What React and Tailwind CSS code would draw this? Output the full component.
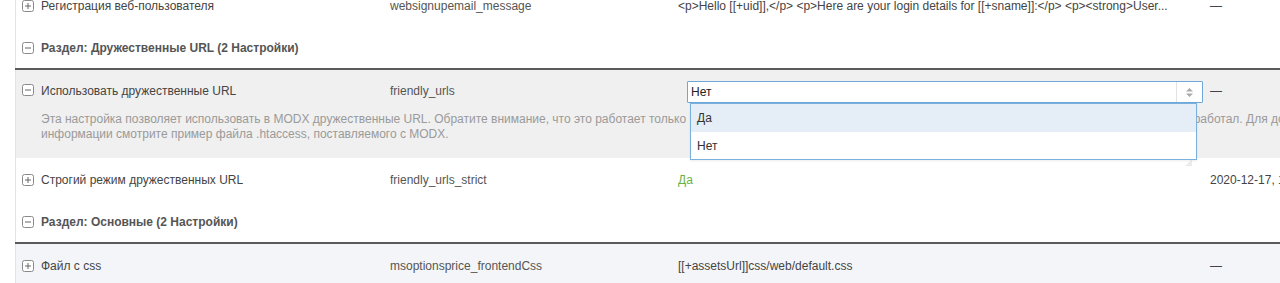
import React from "react";

function PlusBox() {
  return (
    <svg width="12" height="12" viewBox="0 0 12 12" className="block">
      <rect x="0.5" y="0.5" width="11" height="11" rx="2" fill="white" stroke="#8a8a8a" />
      <path d="M3 6h6M6 3v6" stroke="#666" strokeWidth="1" />
    </svg>
  );
}

function MinusBox() {
  return (
    <svg width="12" height="12" viewBox="0 0 12 12" className="block">
      <rect x="0.5" y="0.5" width="11" height="11" rx="2" fill="white" stroke="#8a8a8a" />
      <path d="M3 6h6" stroke="#666" strokeWidth="1" />
    </svg>
  );
}

function Row({ icon, name, k, value, last, bg = "" }) {
  return (
    <div className={`flex items-center h-[42px] pt-[1px] ${bg}`}>
      <div className="w-[25px] shrink-0 pl-[6px]">{icon}</div>
      <div className="w-[349px] shrink-0 text-[#444]">{name}</div>
      <div className="w-[288px] shrink-0 text-[#555]">{k}</div>
      <div className="w-[532px] shrink-0 text-[#444] whitespace-nowrap overflow-hidden">{value}</div>
      <div className="shrink-0 whitespace-nowrap text-[#444]">{last}</div>
    </div>
  );
}

function Section({ title }) {
  return (
    <div className="flex flex-col">
      <div className="flex items-center h-[42px] pt-[2px]">
        <div className="w-[25px] shrink-0 pl-[6px]">
          <MinusBox />
        </div>
        <div className="font-bold text-[#555]">{title}</div>
      </div>
      <div className="h-[2px] bg-[#5a5a5a] -ml-px" />
    </div>
  );
}

export default function App() {
  return (
    <div className="w-[1280px] h-[283px] overflow-hidden bg-white font-['Liberation_Sans',Arial,sans-serif] text-[12px] leading-[14px]">
      <div className="ml-[15px] w-[1400px] border-l border-[#e3e3e3] -mt-[16px]">
        <Row
          icon={<PlusBox />}
          name="Регистрация веб-пользователя"
          k="websignupemail_message"
          value="<p>Hello [[+uid]],</p> <p>Here are your login details for [[+sname]]:</p> <p><strong>User..."
          last="—"
        />
        <Section title="Раздел: Дружественные URL (2 Настройки)" />

        <div className="bg-[#f0f0f0] h-[88px] relative">
          <div className="flex items-start pt-[13px]">
            <div className="w-[25px] shrink-0 pl-[6px] pt-[1px]">
              <MinusBox />
            </div>
            <div className="w-[349px] shrink-0 text-[#444] pt-[1px]">Использовать дружественные URL</div>
            <div className="w-[288px] shrink-0 text-[#555] pt-[1px]">friendly_urls</div>
            <div className="w-[532px] shrink-0 pl-[9px] pr-[7px] relative">
              <div className="h-[22px] -mt-[2px] border border-[#6fa7d8] bg-white flex items-center rounded-[1px]">
                <div className="flex-1 pl-[3px] text-[#222]">Нет</div>
                <div className="w-[26px] h-full border-l border-[#e2e2e2] flex items-center justify-center">
                  <svg width="9" height="13" viewBox="0 0 9 13">
                    <path d="M1 5.5L4.5 2L8 5.5Z" fill="#aaa" />
                    <path d="M1 7.5L4.5 11L8 7.5Z" fill="#aaa" />
                  </svg>
                </div>
              </div>
              <div className="absolute left-[12px] top-[20px] w-[507px] z-10 bg-white border border-[#7ab0de] shadow-[0_1px_2px_rgba(0,0,0,0.08)]">
                <div className="h-[28px] flex items-center pl-[6px] bg-[#e5eef7] text-[#333]">Да</div>
                <div className="h-[27px] flex items-center pl-[6px] text-[#333]">Нет</div>
              </div>
              <div className="absolute left-[508px] top-[77px] z-10">
                <svg width="6" height="6" viewBox="0 0 6 6">
                  <circle cx="5" cy="1" r="0.6" fill="#aaa" />
                  <circle cx="3" cy="3" r="0.6" fill="#aaa" />
                  <circle cx="5" cy="3" r="0.6" fill="#aaa" />
                  <circle cx="1" cy="5" r="0.6" fill="#aaa" />
                  <circle cx="3" cy="5" r="0.6" fill="#aaa" />
                  <circle cx="5" cy="5" r="0.6" fill="#aaa" />
                </svg>
              </div>
            </div>
            <div className="shrink-0 text-[#444] pt-[1px]">—</div>
          </div>
          <div className="pl-[25px] pt-[9px] text-[#9a9a9a] whitespace-nowrap leading-[15px]">
            <div>
              Эта настройка позволяет использовать в MODX дружественные URL. Обратите внимание, что это работает только на сервере Apache, и вам надо будет написать файл .htaccess, чтобы этот функционал заработал. Для дополнительной
            </div>
            <div>информации смотрите пример файла .htaccess, поставляемого с MODX.</div>
          </div>
        </div>

        <Row
          icon={<PlusBox />}
          name="Строгий режим дружественных URL"
          k="friendly_urls_strict"
          value={<span className="text-[#6cb23f]">Да</span>}
          last="2020-12-17, 14:25:38"
        />
        <Section title="Раздел: Основные (2 Настройки)" />
        <Row
          bg="bg-[#f4f5f8]"
          icon={<PlusBox />}
          name="Файл с css"
          k="msoptionsprice_frontendCss"
          value="[[+assetsUrl]]css/web/default.css"
          last="—"
        />
      </div>
    </div>
  );
}
